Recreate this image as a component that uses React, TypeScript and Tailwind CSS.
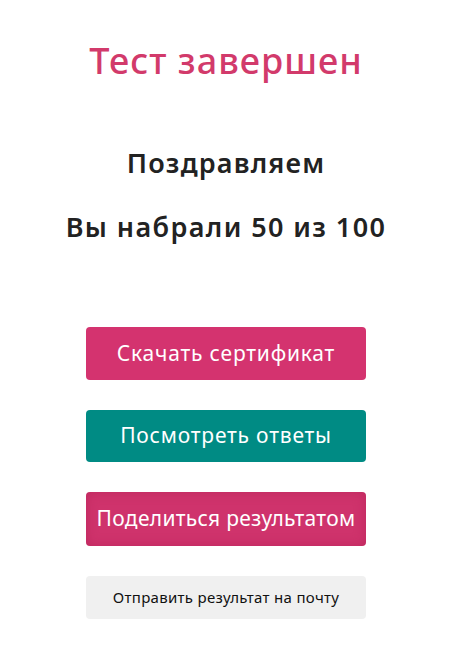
import React from 'react';

const font = { fontFamily: '"Noto Sans", "Open Sans", sans-serif' };

export default function App() {
  return (
    <div className="min-h-screen bg-white flex flex-col items-center pr-[14px]" style={font}>
      <h1 className="mt-[36px] text-[36px] leading-[50px] font-medium tracking-[1px] text-[#d23a6b]">Тест завершен</h1>

      <p className="mt-[59px] text-[27px] leading-[36px] font-semibold tracking-[1.2px] text-[#222222]">Поздравляем</p>
      <p className="mt-[28px] text-[27px] leading-[36px] font-semibold tracking-[1.4px] text-[#222222]">Вы набрали 50 из 100</p>

      <div className="mt-[82px] flex flex-col gap-[30px] w-[280px]">
        <button className="h-[53px] rounded-[4px] bg-[#d4336f] text-white text-[21px] tracking-[0.8px]">
          Скачать сертификат
        </button>
        <button className="h-[52px] rounded-[4px] bg-[#008b84] text-white text-[21px] tracking-[0.8px]">
          Посмотреть ответы
        </button>
        <button className="h-[54px] rounded-[4px] bg-[#cf336c] text-white text-[21px] tracking-[0.3px] shadow-[inset_0_0_12px_rgba(160,20,70,0.35)]">
          Поделиться результатом
        </button>
        <button className="h-[43px] rounded-[4px] bg-[#f0f0f0] text-[#111111] text-[15px] tracking-[0.3px]">
          Отправить результат на почту
        </button>
      </div>
    </div>
  );
}
